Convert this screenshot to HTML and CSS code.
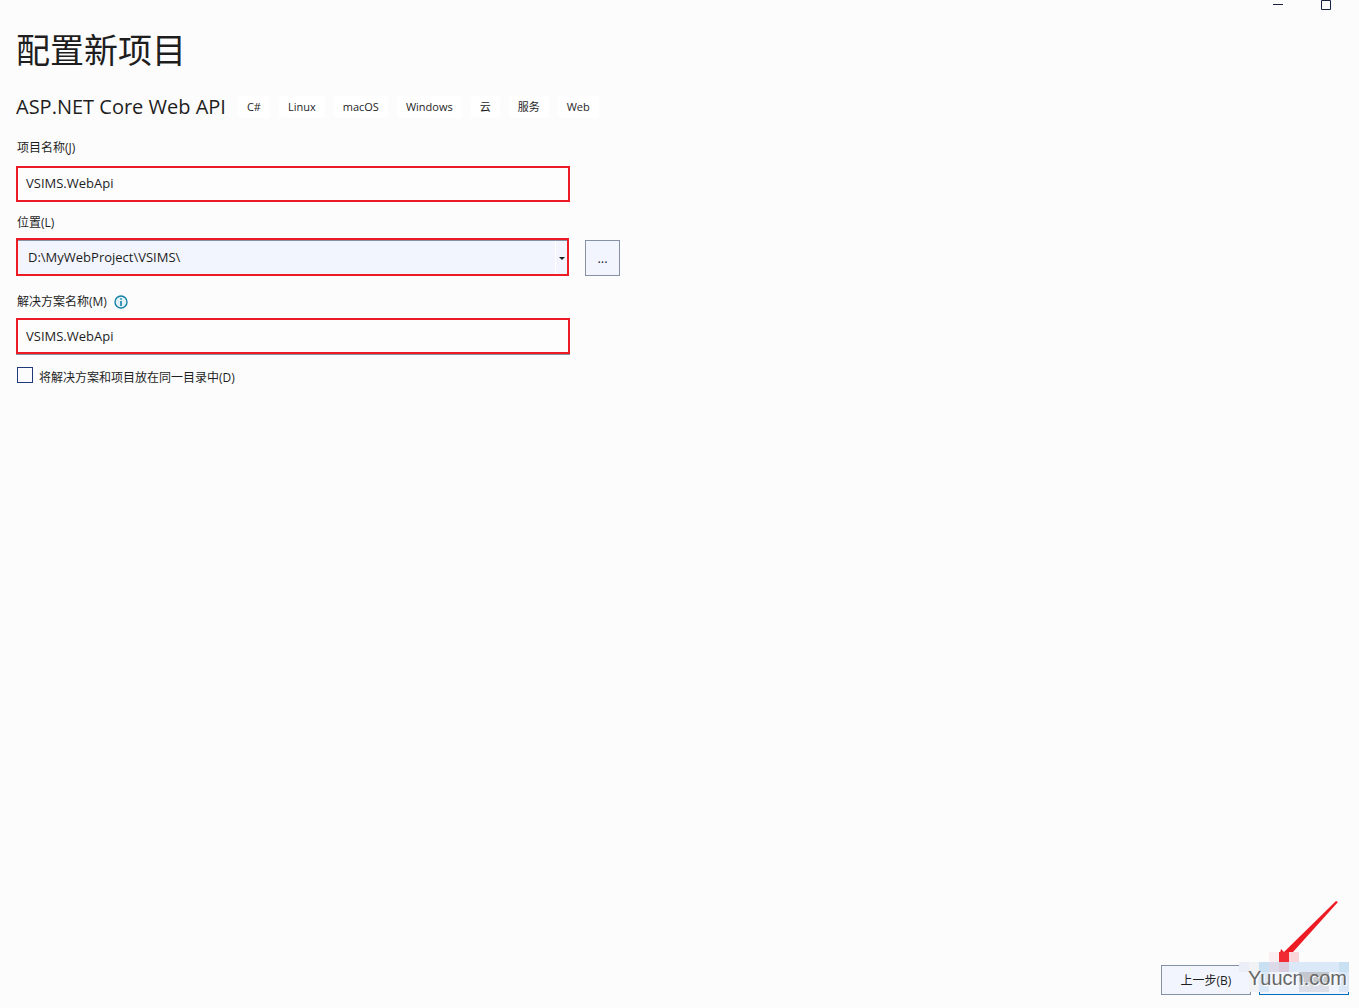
FILE: index.html
```html
<!DOCTYPE html>
<html lang="zh-CN">
<head>
    <meta charset="UTF-8">
    <meta name="viewport" content="width=device-width, initial-scale=1.0">
    <title>配置新项目</title>
    <link rel="stylesheet" href="styles.css">
</head>
<body>
    <!-- Window buttons -->
    <div class="window-bar">
        <button type="button" class="window-btn" aria-label="最小化">
            <svg width="10" height="10" viewBox="0 0 10 10"><path d="M0 4.5h10" stroke="#16223f"/></svg>
        </button>
        <button type="button" class="window-btn" aria-label="最大化">
            <svg width="10" height="10" viewBox="0 0 10 10"><path d="M.5.5h9v9h-9z" fill="none" stroke="#16223f"/></svg>
        </button>
    </div>

    <form class="project-form">
        <h1>配置新项目</h1>

        <div class="template">
            <h2>ASP.NET Core Web API</h2>
            <ul class="tags">
                <li>C#</li>
                <li>Linux</li>
                <li>macOS</li>
                <li>Windows</li>
                <li>云</li>
                <li>服务</li>
                <li>Web</li>
            </ul>
        </div>

        <div class="field">
            <label for="projectName">项目名称(J)</label>
            <input type="text" id="projectName" class="text-box" value="VSIMS.WebApi">
        </div>

        <div class="field location-field">
            <label for="location">位置(L)</label>
            <div class="location-row">
                <div class="select-wrap">
                    <select id="location">
                        <option>D:\MyWebProject\VSIMS\</option>
                    </select>
                    <span class="select-arrow"></span>
                </div>
                <button type="button" class="browse-btn">...</button>
            </div>
        </div>

        <div class="field">
            <div class="label-row">
                <label for="solutionName">解决方案名称(M)</label>
                <svg class="info-icon" width="14" height="14" viewBox="0 0 14 14">
                    <circle cx="7" cy="7" r="6" fill="#e2f1f6" stroke="#1480a5" stroke-width="1.4"/>
                    <path d="M7 6v5M7 3.2v1.6" stroke="#1480a5" stroke-width="1.6"/>
                </svg>
            </div>
            <input type="text" id="solutionName" class="text-box solution-box" value="VSIMS.WebApi">
        </div>

        <div class="check-row">
            <input type="checkbox" id="sameFolder">
            <label for="sameFolder">将解决方案和项目放在同一目录中(D)</label>
        </div>
    </form>

    <div class="footer">
        <button type="button" class="footer-btn">上一步(B)</button>
        <div class="next-wrap">
            <button type="button" class="footer-btn next-btn" aria-label="下一步"></button>
            <!-- Arrow and pixelated area over the next button -->
            <svg class="marker" width="110" height="100" viewBox="0 0 110 100" shape-rendering="crispEdges">
                <path d="M97 7l2 1L54 58l-9 4-4-3 1-4 3 3z" fill="#ed1c24" shape-rendering="auto"/>
                <path d="M30 58h10v10H30z" fill="#fbeff1"/>
                <path d="M40 58h10v10H40z" fill="#f02b34"/>
                <path d="M50 58h10v10H50z" fill="#fad6da"/>
                <path d="M0 68h10v10H0z" fill="#ebedf7"/>
                <path d="M10 68h10v30H10z" fill="#f1f2f4"/>
                <path d="M20 68h90v10H20z" fill="#dbe8f7"/>
                <path d="M20 68h10v10H20zM100 68h10v10h-10z" fill="#c9dff2"/>
                <path d="M30 68h10v10H30z" fill="#dcdae8"/>
                <path d="M40 68h10v10H40z" fill="#dacddd"/>
                <path d="M20 78h90v20H20z" fill="#f0f4fd"/>
                <path d="M20 78h10v20H20zM100 78h10v20h-10z" fill="#d9e7f7"/>
                <path d="M60 78h30v10H60z" fill="#c3c7cd"/>
                <path d="M60 88h30v10H60z" fill="#dcdfe7"/>
            </svg>
            <span class="watermark">Yuucn.com</span>
        </div>
    </div>
</body>
</html>
```
FILE: styles.css
```css
* {
    margin: 0;
    padding: 0;
    box-sizing: border-box;
}

body {
    display: flex;
    flex-direction: column;
    min-height: 100vh;
    background: #fcfcfc;
    color: #1e1e1e;
    font-family: "Open Sans", "Noto Sans CJK SC", sans-serif;
    font-size: 12px;
    line-height: 18px;
}

button, input, select {
    font-family: inherit;
    color: inherit;
}

/* Window buttons */
.window-bar {
    display: flex;
    justify-content: flex-end;
    gap: 38px;
    height: 24px;
    padding-right: 28px;
}
.window-btn {
    display: flex;
    height: 10px;
    background: none;
    border: none;
}

/* Form */
.project-form {
    flex: 1;
    padding: 0 16px;
}
h1 {
    font-size: 34px;
    font-weight: 400;
    line-height: 52px;
}
.template {
    display: flex;
    align-items: center;
    gap: 12px;
    margin: 17px 0 18px;
}
h2 {
    font-size: 20px;
    font-weight: 400;
    line-height: 28px;
}
.tags {
    display: flex;
    gap: 9px;
    list-style: none;
}
.tags li {
    padding: 2px 9px;
    background: white;
    border-radius: 4px;
    font-size: 11px;
}
.field {
    max-width: 604px;
    margin-bottom: 12px;
}
.location-field {
    margin-bottom: 17px;
}
.field label {
    display: block;
    padding-left: 1px;
}
.text-box {
    display: block;
    width: 554px;
    max-width: 100%;
    height: 36px;
    margin-top: 9px;
    padding: 0 8px 2px;
    background: #fdfdfd;
    border: 2px solid #ed1c24;
    font-size: 13px;
}
.solution-box {
    margin-top: 7px;
    padding-bottom: 0;
    box-shadow: 0 1px #8591a5;
}
.location-row {
    display: flex;
    align-items: flex-end;
    gap: 16px;
    margin-top: 6px;
}
.select-wrap {
    flex: 1;
    position: relative;
}
select {
    display: block;
    width: 100%;
    height: 38px;
    padding: 0 10px;
    background: #f2f5fd;
    border: 2px solid #ed1c24;
    border-radius: 0;
    box-shadow: inset 0 1px #8591a5;
    font-size: 13px;
    appearance: none;
}
.select-arrow {
    position: absolute;
    top: 3px;
    right: 2px;
    bottom: 2px;
    width: 12px;
    border-left: 1px solid white;
    pointer-events: none;
}
.select-arrow::after {
    content: "";
    position: absolute;
    top: 16px;
    left: 3px;
    border: 3px solid transparent;
    border-top-color: #1e1e1e;
    border-bottom: none;
}
.browse-btn {
    width: 35px;
    height: 36px;
    background: #f2f5fd;
    border: 1px solid #8591a5;
    font-size: 13px;
}
.label-row {
    display: flex;
    align-items: center;
    gap: 7px;
}
.check-row {
    display: flex;
    align-items: flex-start;
    gap: 6px;
    padding-left: 1px;
    line-height: 24px;
}
.check-row input {
    width: 16px;
    height: 16px;
    margin-top: 1px;
    background: #fcfcfc;
    border: 1px solid #1f3a78;
    appearance: none;
}

/* Footer */
.footer {
    display: flex;
    justify-content: flex-end;
    gap: 8px;
    padding: 0 10px 13px;
}
.footer-btn {
    width: 90px;
    height: 30px;
    background: #f2f5fd;
    border: 1px solid #8591a5;
    font-size: 12px;
}
.next-wrap {
    position: relative;
}
.next-btn {
    display: block;
    border-color: #006cbe;
}
.marker {
    position: absolute;
    right: 0;
    bottom: 1px;
}
.watermark {
    position: absolute;
    right: 2px;
    bottom: 5px;
    color: #666;
    font-family: "Liberation Sans", Arial, sans-serif;
    font-size: 20px;
    line-height: 24px;
    text-shadow: 1px 1px white;
}
```
